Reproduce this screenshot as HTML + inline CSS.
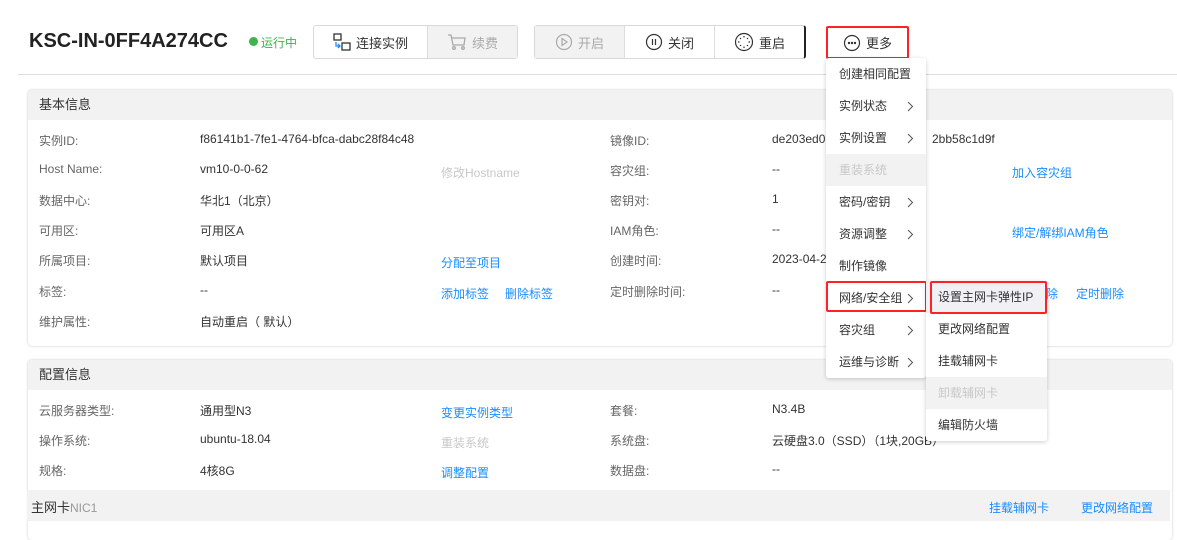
<!DOCTYPE html>
<html><head><meta charset="utf-8"><style>
*{margin:0;padding:0;box-sizing:border-box}
body{width:1177px;height:529px;overflow:hidden;background:#fff;font-family:"Liberation Sans","Noto Sans CJK SC",sans-serif;font-size:12px;color:#333;position:relative}
.a{position:absolute;white-space:nowrap}
.lbl{color:#666}
.lnk{color:#1a8cff}
.dis{color:#c8c8c8}
.btn{position:absolute;top:25px;height:34px;display:flex;align-items:center;justify-content:center;font-size:13px;color:#333;gap:5px}
.panel{position:absolute;left:28px;right:5px;border-radius:4px;box-shadow:0 0 2px rgba(0,0,0,.25);background:#fff}
.ph{height:30px;background:#f2f2f2;border-radius:4px 4px 0 0;padding-left:11px;line-height:30px;font-size:13px;color:#333}
.menu{position:absolute;background:#fff;box-shadow:0 1px 4px rgba(0,0,0,.2);border-radius:3px}
.mi{height:32px;line-height:32px;padding-left:13px;font-size:12px;color:#333;position:relative}
.mi .ar{position:absolute;right:12px;top:11px;width:7px;height:11px}
.mi.g{background:#f2f2f2;color:#c8c8c8}
</style></head><body>
<svg width="0" height="0" style="position:absolute"><symbol id="chev" viewBox="0 0 7 11"><path d="M1 1l4.5 4.5L1 10" fill="none" stroke="#555" stroke-width="1"/></symbol></svg>
<div class="a" style="left:29px;top:30px;font-size:20px;font-weight:bold;color:#222">KSC-IN-0FF4A274CC</div>
<div class="a" style="left:249px;top:37px;width:9px;height:9px;border-radius:50%;background:#3cb44b"></div>
<div class="a" style="left:261px;top:34px;font-size:12px;color:#3cb44b">运行中</div>

<div class="a" style="left:313px;top:25px;width:205px;height:34px;border:1px solid #d9d9d9;border-radius:3px"></div>
<div class="btn" style="left:314px;width:113px">
<svg width="18" height="18" viewBox="0 0 18 18" fill="none" stroke="#333" stroke-width="1.3"><rect x="1" y="1" width="7" height="6"/><rect x="9" y="10" width="8" height="7"/><path d="M3 9v4h4M5 11l2 2-2 2" stroke="#1a8cff"/></svg>连接实例</div>
<div class="btn" style="left:427px;width:90px;top:26px;height:32px;background:#f2f2f2;border-left:1px solid #ddd;color:#aaa">
<svg width="20" height="18" viewBox="0 0 20 18" fill="none" stroke="#aaa" stroke-width="1.3"><path d="M1 2h3l2 10h11l1-7H5"/><circle cx="7" cy="15" r="1.3"/><circle cx="16" cy="15" r="1.3"/></svg>续费</div>

<div class="a" style="left:534px;top:25px;width:272px;height:34px;border:1px solid #d9d9d9;border-right:2px solid #222;border-radius:3px"></div>
<div class="btn" style="left:535px;width:89px;top:26px;height:32px;background:#f2f2f2;color:#aaa">
<svg width="18" height="18" viewBox="0 0 18 18" fill="none" stroke="#aaa" stroke-width="1.2"><circle cx="9" cy="9" r="7.5"/><path d="M7 5.5l5 3.5-5 3.5z"/></svg>开启</div>
<div class="btn" style="left:624px;width:90px;border-left:1px solid #ddd">
<svg width="18" height="18" viewBox="0 0 18 18" fill="none" stroke="#333" stroke-width="1.2"><circle cx="9" cy="9" r="7.5"/><path d="M7.5 6v6M10.5 6v6"/></svg>关闭</div>
<div class="btn" style="left:714px;width:90px;border-left:1px solid #ddd">
<svg width="20" height="20" viewBox="0 0 20 20" fill="none" stroke="#333" stroke-width="1.2"><circle cx="10" cy="10" r="8.5"/><path d="M10 4v1.5M10 14.5V16M4 10h1.5M14.5 10H16M6 6l1 1M13 13l1 1M6 14l1-1M13 7l1-1"/></svg>重启</div>

<div class="a" style="left:826px;top:26px;width:83px;height:33px;border:2px solid #ff2222;border-radius:2px"></div>
<div class="btn" style="left:828px;width:79px;top:27px;height:31px">
<svg width="18" height="18" viewBox="0 0 18 18" fill="none" stroke="#333" stroke-width="1.2"><circle cx="9" cy="9" r="7.5"/><circle cx="6" cy="9" r=".6" fill="#333"/><circle cx="9" cy="9" r=".6" fill="#333"/><circle cx="12" cy="9" r=".6" fill="#333"/></svg>更多</div>

<div class="a" style="left:18px;top:74px;width:1159px;height:1px;background:#ddd"></div>

<div class="panel" style="top:90px;height:256px">
<div class="ph">基本信息</div>
</div>
<div class="a lbl" style="left:39px;top:132px">实例ID:</div><div class="a" style="left:200px;top:132px">f86141b1-7fe1-4764-bfca-dabc28f84c48</div>
<div class="a lbl" style="left:39px;top:162px">Host Name:</div><div class="a" style="left:200px;top:162px">vm10-0-0-62</div><div class="a dis" style="left:441px;top:164px">修改Hostname</div>
<div class="a lbl" style="left:39px;top:192px">数据中心:</div><div class="a" style="left:200px;top:192px">华北1（北京）</div>
<div class="a lbl" style="left:39px;top:222px">可用区:</div><div class="a" style="left:200px;top:222px">可用区A</div>
<div class="a lbl" style="left:39px;top:252px">所属项目:</div><div class="a" style="left:200px;top:252px">默认项目</div><div class="a lnk" style="left:441px;top:254px">分配至项目</div>
<div class="a lbl" style="left:39px;top:283px">标签:</div><div class="a" style="left:200px;top:283px">--</div><div class="a lnk" style="left:441px;top:285px">添加标签</div><div class="a lnk" style="left:505px;top:285px">删除标签</div>
<div class="a lbl" style="left:39px;top:313px">维护属性:</div><div class="a" style="left:200px;top:313px">自动重启（ 默认）</div>

<div class="a lbl" style="left:610px;top:132px">镜像ID:</div><div class="a" style="left:772px;top:132px">de203ed0-</div><div class="a" style="left:932px;top:132px">2bb58c1d9f</div>
<div class="a lbl" style="left:610px;top:162px">容灾组:</div><div class="a" style="left:772px;top:162px">--</div><div class="a lnk" style="left:1012px;top:164px">加入容灾组</div>
<div class="a lbl" style="left:610px;top:192px">密钥对:</div><div class="a" style="left:772px;top:192px">1</div>
<div class="a lbl" style="left:610px;top:222px">IAM角色:</div><div class="a" style="left:772px;top:222px">--</div><div class="a lnk" style="left:1012px;top:224px">绑定/解绑IAM角色</div>
<div class="a lbl" style="left:610px;top:252px">创建时间:</div><div class="a" style="left:772px;top:252px">2023-04-2</div>
<div class="a lbl" style="left:610px;top:283px">定时删除时间:</div><div class="a" style="left:772px;top:283px">--</div><div class="a lnk" style="left:1046px;top:285px">除</div><div class="a lnk" style="left:1076px;top:285px">定时删除</div>

<div class="panel" style="top:360px;height:180px">
<div class="ph">配置信息</div>
</div>
<div class="a lbl" style="left:39px;top:402px">云服务器类型:</div><div class="a" style="left:200px;top:402px">通用型N3</div><div class="a lnk" style="left:441px;top:404px">变更实例类型</div>
<div class="a lbl" style="left:39px;top:432px">操作系统:</div><div class="a" style="left:200px;top:432px">ubuntu-18.04</div><div class="a dis" style="left:441px;top:434px">重装系统</div>
<div class="a lbl" style="left:39px;top:462px">规格:</div><div class="a" style="left:200px;top:462px">4核8G</div><div class="a lnk" style="left:441px;top:464px">调整配置</div>
<div class="a lbl" style="left:610px;top:402px">套餐:</div><div class="a" style="left:772px;top:402px">N3.4B</div>
<div class="a lbl" style="left:610px;top:432px">系统盘:</div><div class="a" style="left:772px;top:432px">云硬盘3.0（SSD）（1块,20GB）</div>
<div class="a lbl" style="left:610px;top:462px">数据盘:</div><div class="a" style="left:772px;top:462px">--</div>
<div class="a" style="left:27px;top:490px;width:1143px;height:31px;background:#f2f2f2"></div>
<div class="a" style="left:31px;top:497px;font-size:13px">主网卡<span style="color:#999;font-size:12px">NIC1</span></div>
<div class="a lnk" style="left:989px;top:499px">挂载辅网卡</div><div class="a lnk" style="left:1081px;top:499px">更改网络配置</div>

<div class="menu" style="left:826px;top:58px;width:100px;height:320px">
<div class="mi">创建相同配置</div>
<div class="mi">实例状态<svg class="ar"><use href="#chev"/></svg></div>
<div class="mi">实例设置<svg class="ar"><use href="#chev"/></svg></div>
<div class="mi g">重装系统</div>
<div class="mi">密码/密钥<svg class="ar"><use href="#chev"/></svg></div>
<div class="mi">资源调整<svg class="ar"><use href="#chev"/></svg></div>
<div class="mi">制作镜像</div>
<div class="mi">网络/安全组<svg class="ar"><use href="#chev"/></svg></div>
<div class="mi">容灾组<svg class="ar"><use href="#chev"/></svg></div>
<div class="mi">运维与诊断<svg class="ar"><use href="#chev"/></svg></div>
</div>
<div class="a" style="left:826px;top:281px;width:101px;height:31px;border:2px solid #ff2222;border-radius:2px"></div>

<div class="menu" style="left:926px;top:281px;width:121px;height:160px">
<div class="mi" style="padding-left:12px;background:#f0f0f5">设置主网卡弹性IP</div>
<div class="mi" style="padding-left:12px">更改网络配置</div>
<div class="mi" style="padding-left:12px">挂载辅网卡</div>
<div class="mi g" style="padding-left:12px">卸载辅网卡</div>
<div class="mi" style="padding-left:12px">编辑防火墙</div>
</div>
<div class="a" style="left:930px;top:281px;width:117px;height:33px;border:2px solid #ff2222;border-radius:2px"></div>
</body></html>
